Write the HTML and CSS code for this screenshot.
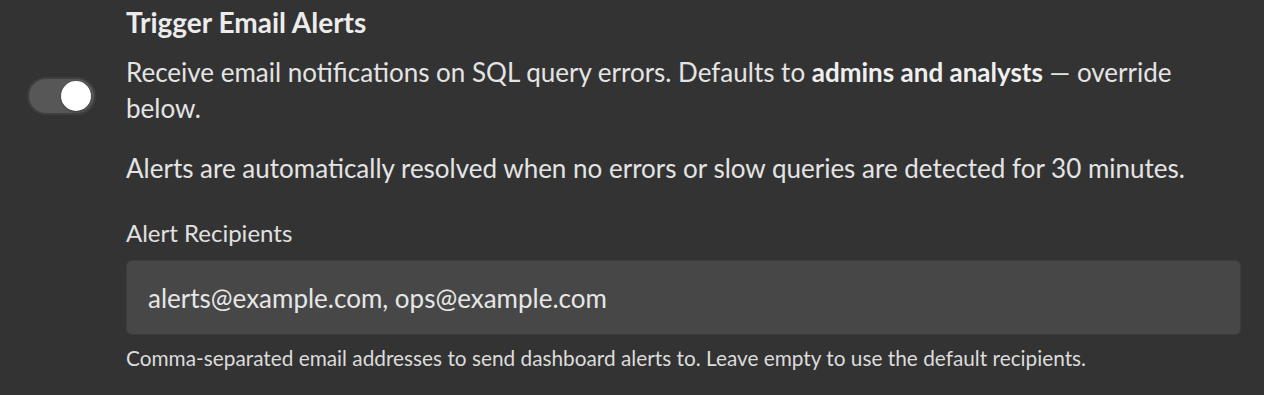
FILE: index.html
```html
<!DOCTYPE html>
<html lang="en">
<head>
<meta charset="utf-8">
<title>Trigger Email Alerts</title>
<link rel="stylesheet" href="styles.css">
</head>
<body>
<section class="setting">
  <div class="toggle-col">
    <button class="toggle is-on" type="button" role="switch" aria-checked="true" aria-label="Trigger Email Alerts">
      <span class="knob"></span>
    </button>
  </div>
  <div class="content">
    <h2 class="title">Trigger Email Alerts</h2>
    <p class="desc">Receive email notifications on SQL query errors. Defaults to <strong>admins and analysts</strong> — override below.</p>
    <p class="desc note">Alerts are automatically resolved when no errors or slow queries are detected for 30 minutes.</p>
    <label class="field-label" for="recipients">Alert Recipients</label>
    <input class="field-input" id="recipients" type="text" value="alerts@example.com, ops@example.com">
    <p class="help">Comma-separated email addresses to send dashboard alerts to. Leave empty to use the default recipients.</p>
  </div>
</section>
</body>
</html>
```

FILE: styles.css
```css
html, body {
  margin: 0;
  padding: 0;
  background: #333333;
}
body {
  font-family: Lato, "Noto Sans", sans-serif;
  color: #e8e8e8;
}
.setting {
  display: flex;
  align-items: flex-start;
  padding: 5px 23px 0 27px;
}
.toggle-col {
  width: 99px;
  flex: none;
  padding-top: 72px;
}
.toggle {
  display: flex;
  align-items: center;
  justify-content: flex-end;
  width: 69px;
  height: 38px;
  margin: 0;
  padding: 0 3px;
  box-sizing: border-box;
  border: 2px solid #3e3e3e;
  border-radius: 19px;
  background: #575757;
  cursor: pointer;
}
.knob {
  width: 30px;
  height: 30px;
  border-radius: 50%;
  background: #ffffff;
  box-shadow: 0 1px 2px rgba(0,0,0,0.35);
}
.content {
  flex: 1;
  min-width: 0;
  display: flex;
  flex-direction: column;
}
.title {
  margin: 0 0 15px;
  font-size: 28px;
  line-height: 34px;
  font-weight: 700;
  color: #ececec;
}
.desc {
  margin: 0;
  font-size: 26px;
  line-height: 36.4px;
  color: #e4e4e4;
}
.desc strong {
  font-weight: 700;
  color: #efefef;
}
.note {
  margin-top: 23px;
}
.field-label {
  margin-top: 29.5px;
  font-size: 24px;
  line-height: 33.6px;
  color: #e0e0e0;
}
.field-input {
  margin-top: 11px;
  height: 75px;
  box-sizing: border-box;
  padding: 0 21px;
  border: 1px solid #3d3d3d;
  border-radius: 6px;
  background: #474747;
  color: #e6e6e6;
  font-family: inherit;
  font-size: 26px;
  outline: none;
}
.help {
  margin: 7.5px 0 0;
  font-size: 20.8px;
  line-height: 29px;
  color: #dcdcdc;
}
```
